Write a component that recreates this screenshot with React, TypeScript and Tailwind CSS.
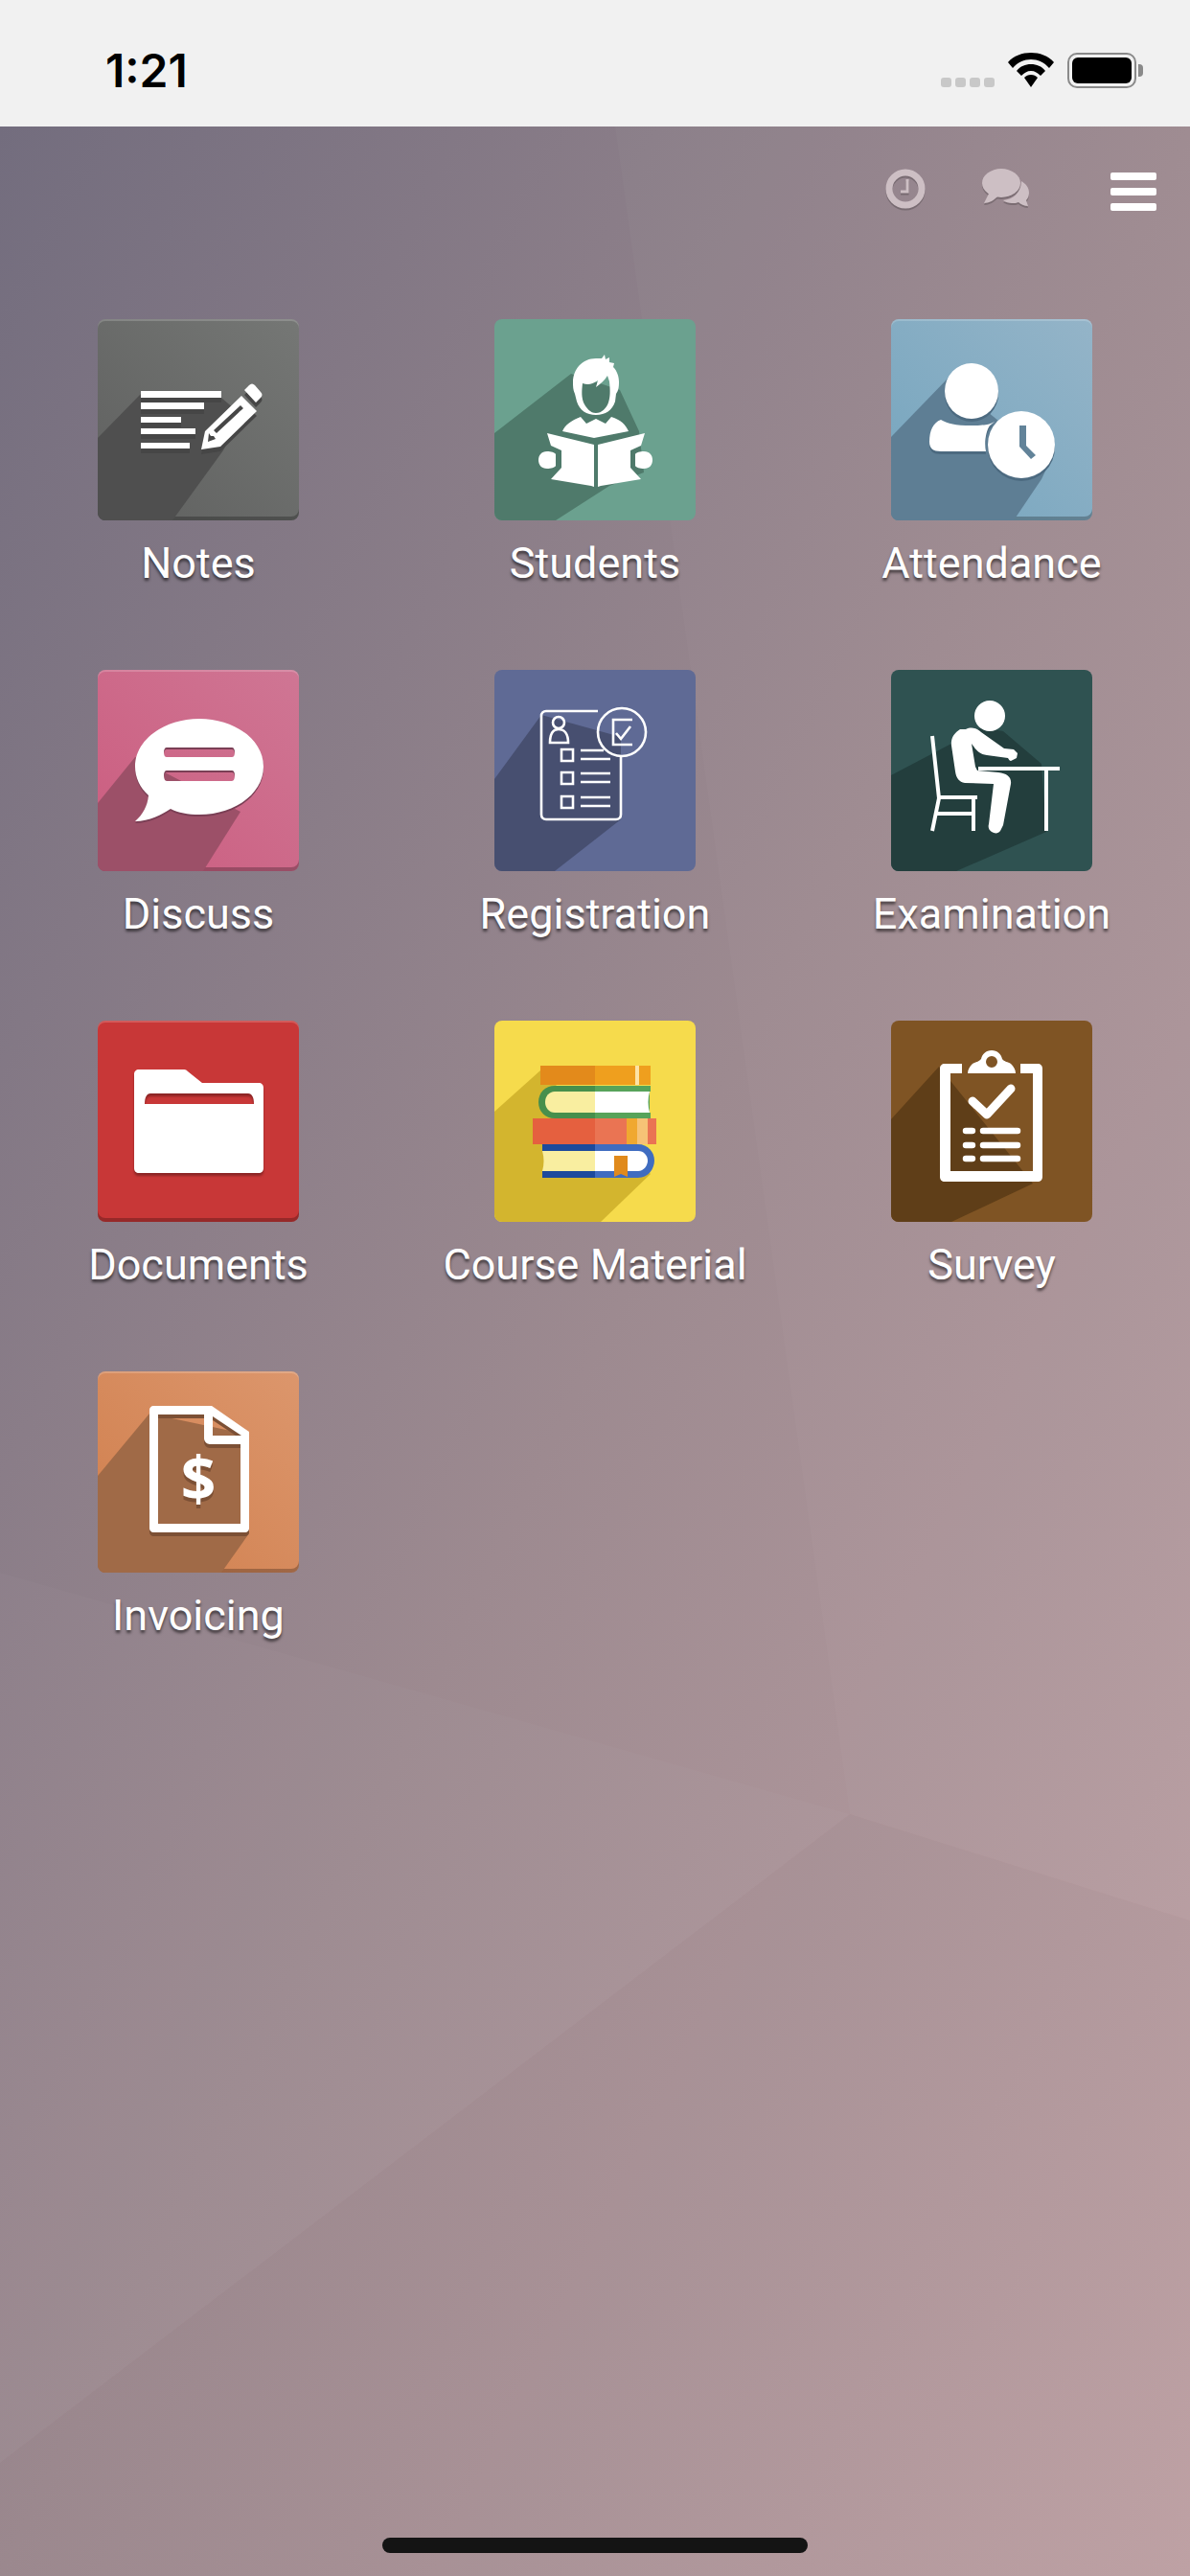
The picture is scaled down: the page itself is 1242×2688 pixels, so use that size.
import type { ReactNode } from "react";

type AppItem = {
  name: string;
  tile: string;
  edge?: boolean;
  shadow: string;
  shadowColor: string;
  lift: string;
  icon: ReactNode;
};

const NotesIcon = (
  <>
    <path d="M45 75h84v7H45zM45 87h66v7H45zM45 102h42v6H45zM45 114h57v6H45zM45 129h51v6H45z" fill="#fff" />
    <path
      fillRule="evenodd"
      fill="#fff"
      d="M108 136l4-19 38-37 16 16-38 37zM116 119l-1 9 8-3-2-3-3 0zM121 116l3 3 28-26-3-3zM153 74l5-5c2-2 4-2 6 0l6 7c2 2 2 4 0 6l-5 5z"
    />
  </>
);

const StudentsIcon = (
  <>
    <path
      fill="#fff"
      fillRule="evenodd"
      d="M106 41l6 0 3-4 1 5 4-2 0 5 5 1-1 4c4 4 6 10 6 16 0 6-1 9-3 12l-1 8c-3 9-10 14-20 14s-17-5-20-14l-2-8c-2-4-2-8-2-12 0-14 10-25 24-25zM92 67c-1 9-1 14 1 20 3 6 7 11 13 11s11-5 13-11c2-6 2-12 1-22l-2-6c-3 5-7 8-12 12l2-7c-6 4-10 5-16 3z"
    />
    <path fill="#fff" d="M71 117c3-7 9-11 19-15l6 7 10-5 10 5 6-7c10 3 15 8 18 15l-36 7z" />
    <path fill="#fff" d="M55 119l49 12v44l-3-1-42-7 11-12v-18l-11-5zM157 119l-49 12v44l3-1 42-7-11-12v-18l11-5z" />
    <path fill="#fff" d="M55 138c4 0 8 1 9 3v12c-1 2-5 3-9 3-6 0-9-4-9-9s3-9 9-9zM156 138c-4 0-8 1-9 3v12c1 2 5 3 9 3 6 0 9-4 9-9s-3-9-9-9z" />
  </>
);

const AttendanceIcon = (
  <>
    <ellipse cx="84" cy="75" rx="28" ry="29" fill="#fff" />
    <path fill="#fff" d="M52 105c8 4 14 6 32 6s20-2 24-4l-5 4c-4 6-6 18-4 27H52c-8 0-12-3-12-10 0-12 4-20 12-23z" />
    <circle cx="136" cy="131" r="35" fill="#fff" />
    <path d="M134 111h7v21l10 10-5 4-12-13z" fill="#628399" />
  </>
);

const DiscussIcon = (
  <path
    fill="#fff"
    fillRule="evenodd"
    d="M106 51c37 0 67 22 67 50s-30 50-67 50c-12 0-22-2-30-6-9 6-22 13-37 13 8-7 13-16 14-27-9-8-14-19-14-30 0-28 30-50 67-50zM72 81c-2 0-3 2-3 5s1 5 3 5h68c2 0 3-2 3-5s-1-5-3-5zM72 105c-2 0-3 2-3 5s1 6 3 6h68c2 0 3-3 3-6s-1-5-3-5z"
  />
);

const RegistrationIcon = (
  <g stroke="#fff" fill="none" strokeWidth="2.6">
    <path d="M108 43H54c-3 0-5 2-5 5v103c0 3 2 5 5 5h73c3 0 5-2 5-5V90" />
    <circle cx="133" cy="65" r="25" />
    <path d="M144 52h-20v26h20M127 66l5 6 10-13" />
    <circle cx="67" cy="55" r="6" />
    <path d="M58 76c0-9 3-14 9-14s10 5 10 14z" />
    <path d="M70 83h12v12H70zM70 107h12v12H70zM70 132h12v12H70z" />
    <path d="M90 84h24M90 93h31M90 108h31M90 117h31M90 133h31M90 142h31" />
  </g>
);

const ExaminationIcon = (
  <>
    <ellipse cx="103" cy="48" rx="16" ry="16" fill="#fff" />
    <path
      fill="#fff"
      d="M78 62c6-3 12-1 16 3l24 17 10 1 4 4-1 5-6 3c-1 0-2-1-3-3l-22-3c-8-1-11-5-16-12l4 24 2 4 22 2c9 1 14 5 13 12l-8 43-3 6c-2 3-6 3-9 1-3-2-4-5-3-8l5-42-30-1c-6-1-9-5-10-12l-4-27c-1-8 3-13 9-17z"
    />
    <path stroke="#fff" strokeWidth="4" fill="none" d="M43 69l7 65-7 34M50 133h40M86 134v34M48 150h38M91 103h85M162 103v65" />
  </>
);

const DocumentsIcon = (
  <path
    fill="#fff"
    fillRule="evenodd"
    d="M43 51h46c2 0 3 0 5 2l15 12h59c3 0 5 2 5 5v84c0 3-2 5-5 5H43c-3 0-5-2-5-5V56c0-3 2-5 5-5zM55 76c-4 0-6 4-6 11h114c0-7-2-11-6-11z"
  />
);

const CourseIcon = (
  <>
    <path d="M48 47h57v20H48z" fill="#e38a1b" />
    <path d="M105 47h42v20h-42zM151 47h12v20h-12z" fill="#ef9f1e" />
    <path d="M147 47h4v20h-4z" fill="#fde3a6" />
    <path d="M63 68h42v34H63c-10 0-17-7-17-17s7-17 17-17z" fill="#478f4c" />
    <path d="M105 68h58v6h-1v22h1v6h-58z" fill="#57a35a" />
    <path d="M63 74h42v22H63c-6 0-10-5-10-11s4-11 10-11z" fill="#f9eea0" />
    <path d="M105 74h57c-2 7-2 15 0 22h-57z" fill="#fff" />
    <path d="M40 102h65v27H40z" fill="#e5603f" />
    <path d="M105 102h33v27h-33zM160 102h9v27h-9z" fill="#ea7453" />
    <path d="M138 102h11v27h-11z" fill="#f0a830" />
    <path d="M149 102h11v27h-11z" fill="#f6c276" />
    <path d="M50 129h55v35H50v-7h1c2-7 2-14 0-21h-1z" fill="#1d4a9c" />
    <path d="M105 129h45c10 0 17 8 17 17s-7 18-17 18h-45z" fill="#3f6cc0" />
    <path d="M50 136h55v21H50c2-7 2-14 0-21z" fill="#f9eea0" />
    <path d="M105 136h45c6 0 10 5 10 10s-4 11-10 11h-45z" fill="#fff" />
    <path d="M125 141h14v22l-7-3-7 3z" fill="#e08a1c" />
  </>
);

const SurveyIcon = (
  <>
    <path
      fill="#fff"
      fillRule="evenodd"
      d="M56 45h18v10H62v102h86V55h-13V45h18c3 0 5 2 5 5v113c0 3-2 5-5 5H56c-3 0-5-2-5-5V50c0-3 2-5 5-5z"
    />
    <path
      fill="#fff"
      fillRule="evenodd"
      d="M105 31c6 0 10 4 11 9 2 3 6 3 9 5 3 3 5 6 5 10H80c0-4 2-7 5-10 3-2 7-2 9-5 1-5 5-9 11-9zM105 37a6 6 0 100 12 6 6 0 000-12z"
    />
    <path d="M85 84l15 14 25-27" fill="none" stroke="#fff" strokeWidth="9" strokeLinecap="round" strokeLinejoin="round" />
    <path d="M78 115h7M78 130h7M78 144h7M96 115h36M96 130h36M96 144h36" stroke="#fff" strokeWidth="6.5" strokeLinecap="round" />
  </>
);

const InvoicingIcon = (
  <>
    <path
      fill="#fff"
      fillRule="evenodd"
      d="M58 36h61l39 27v101c0 2-2 4-4 4H58c-2 0-4-2-4-4V40c0-2 2-4 4-4zM63 45v114h86V76h-32c-3 0-6-3-6-6V45zM120 47v20h30z"
    />
    <text x="105" y="135" textAnchor="middle" fill="#fff" fontSize="64" fontWeight="700" fontFamily="'Open Sans', sans-serif">
      $
    </text>
  </>
);

const apps: AppItem[] = [
  { name: "Notes", tile: "bg-gradient-to-tr from-[#5f605f] to-[#757775]", edge: true, shadow: "0,124 45,78 129,82 150,100 131,137 78,210 0,210", shadowColor: "#4f4f4f", lift: "drop-shadow-[0_5px_0_#464646]", icon: NotesIcon },
  { name: "Students", tile: "bg-[#6ba18f]", shadow: "0,119 80,57 131,74 151,117 156,160 120,174 64,210 0,210", shadowColor: "#4f7a6b", lift: "", icon: StudentsIcon },
  { name: "Attendance", tile: "bg-gradient-to-tr from-[#75a5be] to-[#94b4c8]", edge: true, shadow: "0,123 59,62 165,150 157,167 128,210 0,210", shadowColor: "#5e7e94", lift: "drop-shadow-[0_3px_0_#4c6a80]", icon: AttendanceIcon },
  { name: "Discuss", tile: "bg-gradient-to-tr from-[#cb5c7f] to-[#cf7694]", edge: true, shadow: "0,139 39,91 149,148 110,210 0,210", shadowColor: "#9c5068", lift: "drop-shadow-[0_2px_0_#7a3f55]", icon: DiscussIcon },
  { name: "Registration", tile: "bg-[#5f6a95]", shadow: "0,114 49,47 132,70 132,156 63,210 0,210", shadowColor: "#474f70", lift: "", icon: RegistrationIcon },
  { name: "Examination", tile: "bg-[#2f5251]", shadow: "0,110 61,78 95,60 117,64 157,98 162,169 68,210 0,210", shadowColor: "#233e3d", lift: "", icon: ExaminationIcon },
  { name: "Documents", tile: "bg-[#c83737]", edge: true, shadow: "", shadowColor: "", lift: "drop-shadow-[0_3px_1px_#8c2525]", icon: DocumentsIcon },
  { name: "Course Material", tile: "bg-[#f6db4c]", shadow: "0,95 48,52 163,160 111,210 0,210", shadowColor: "#d3b52e", lift: "", icon: CourseIcon },
  { name: "Survey", tile: "bg-[#7f5424]", shadow: "0,103 50,48 148,170 63,210 0,210", shadowColor: "#5f3e18", lift: "", icon: SurveyIcon },
  { name: "Invoicing", tile: "bg-gradient-to-tr from-[#d07f4d] to-[#dc966c]", edge: true, shadow: "0,109 54,44 158,66 158,169 129,210 0,210", shadowColor: "#a06a47", lift: "drop-shadow-[0_4px_0_#7c5035]", icon: InvoicingIcon },
];

function AppTile({ item }: { item: AppItem }) {
  return (
    <div className="flex flex-col items-center">
      <div
        className={`relative h-[210px] w-[210px] overflow-hidden rounded-[8px] ${item.tile} ${
          item.edge ? "shadow-[inset_0_-4px_0_rgba(0,0,0,0.25),inset_0_2px_0_rgba(255,255,255,0.18)]" : ""
        }`}
      >
        <svg viewBox="0 0 210 210" className="block h-full w-full">
          {item.shadow && <polygon points={item.shadow} fill={item.shadowColor} />}
          <g className={item.lift}>{item.icon}</g>
        </svg>
      </div>
      <span className="mt-[20px] whitespace-nowrap font-['Roboto',sans-serif] text-[45px] leading-[50px] text-white [text-shadow:0_3px_3px_rgba(0,0,0,0.55)]">
        {item.name}
      </span>
    </div>
  );
}

export default function App() {
  return (
    <div className="relative flex min-h-[2688px] flex-col overflow-hidden">
      <header className="flex h-[132px] shrink-0 items-start justify-between bg-[#f1f1f1] pl-[110px] pr-[49px] pt-[46px]">
        <span className="font-['Inter',sans-serif] text-[48px] font-semibold leading-[56px] text-black">1:21</span>
        <div className="flex items-start pt-[9px]">
          <div className="mt-[26px] flex gap-[4px]">
            <span className="h-[10px] w-[11px] rounded-[3px] bg-[#c8c8c8]" />
            <span className="h-[10px] w-[11px] rounded-[3px] bg-[#c8c8c8]" />
            <span className="h-[10px] w-[11px] rounded-[3px] bg-[#c8c8c8]" />
            <span className="h-[10px] w-[11px] rounded-[3px] bg-[#c8c8c8]" />
          </div>
          <svg viewBox="0 0 48 36" className="ml-[14px] h-[36px] w-[48px]" fill="#000">
            <path d="M24 0c9 0 18 3 24 10l-5 6C38 10 31 7 24 7S10 10 5 16l-5-6C6 3 15 0 24 0z" />
            <path d="M24 12c6 0 11 2 15 7l-5 5c-3-3-6-5-10-5s-7 2-10 5l-5-5c4-5 9-7 15-7z" />
            <path d="M24 23c3 0 5 1 7 3L24 36l-7-10c2-2 4-3 7-3z" />
          </svg>
          <div className="ml-[14px] flex items-center">
            <div className="h-[37px] w-[72px] rounded-[10px] border-[2px] border-[#8a8a8a] p-[3px]">
              <div className="h-full w-full rounded-[6px] bg-black" />
            </div>
            <div className="ml-[2px] h-[13px] w-[5px] rounded-r-[4px] bg-[#8a8a8a]" />
          </div>
        </div>
      </header>

      <main className="relative flex-1 bg-gradient-to-br from-[#736d7e] via-[#9d8a90] to-[#c1a3a6]">
        {/* facets of the wallpaper */}
        <svg viewBox="0 0 1242 2556" className="absolute inset-0 h-full w-full">
          <polygon points="642,0 887,1761 1242,1872 1242,0" fill="#fff" fillOpacity="0.025" />
          <polygon points="0,1509 887,1761 0,2438" fill="#fff" fillOpacity="0.02" />
          <polygon points="0,2438 887,1761 1242,1872 1242,2556 0,2556" fill="#000" fillOpacity="0.01" />
        </svg>

        <div className="relative">
          <nav className="flex h-[201px] items-start justify-end pr-[35px] pt-[44px]">
            <svg viewBox="0 0 42 42" className="h-[42px] w-[42px] drop-shadow-[0_2px_0_rgba(0,0,0,0.2)]">
              <circle cx="21" cy="21" r="17" fill="none" stroke="#cdbfc4" strokeWidth="7" />
              <path d="M23 11v13h-7" fill="none" stroke="#cdbfc4" strokeWidth="3" />
            </svg>
            <svg viewBox="0 0 50 40" className="ml-[59px] h-[40px] w-[50px] drop-shadow-[0_2px_0_rgba(0,0,0,0.2)]" fill="#cdbfc4">
              <path d="M41 13c5 3 8 7 8 12 0 3-1 6-3 8l2 6c-4 0-8-2-10-4-2 1-4 1-7 1-3 0-7-1-9-3 10-1 19-8 19-20z" />
              <ellipse cx="20" cy="15" rx="20" ry="15" />
              <path d="M8 24L2 36c5 0 11-3 15-8z" />
            </svg>
            <div className="ml-[84px] flex w-[48px] flex-col gap-[8px] pt-[4px]">
              <span className="h-[8px] rounded-[2px] bg-white" />
              <span className="h-[8px] rounded-[2px] bg-white" />
              <span className="h-[8px] rounded-[2px] bg-white" />
            </div>
          </nav>

          <div className="grid auto-rows-[366px] grid-cols-3">
            {apps.map((item) => (
              <AppTile key={item.name} item={item} />
            ))}
          </div>
        </div>

        <div className="absolute bottom-[24px] left-[399px] h-[16px] w-[444px] rounded-full bg-[#141414]" />
      </main>
    </div>
  );
}
